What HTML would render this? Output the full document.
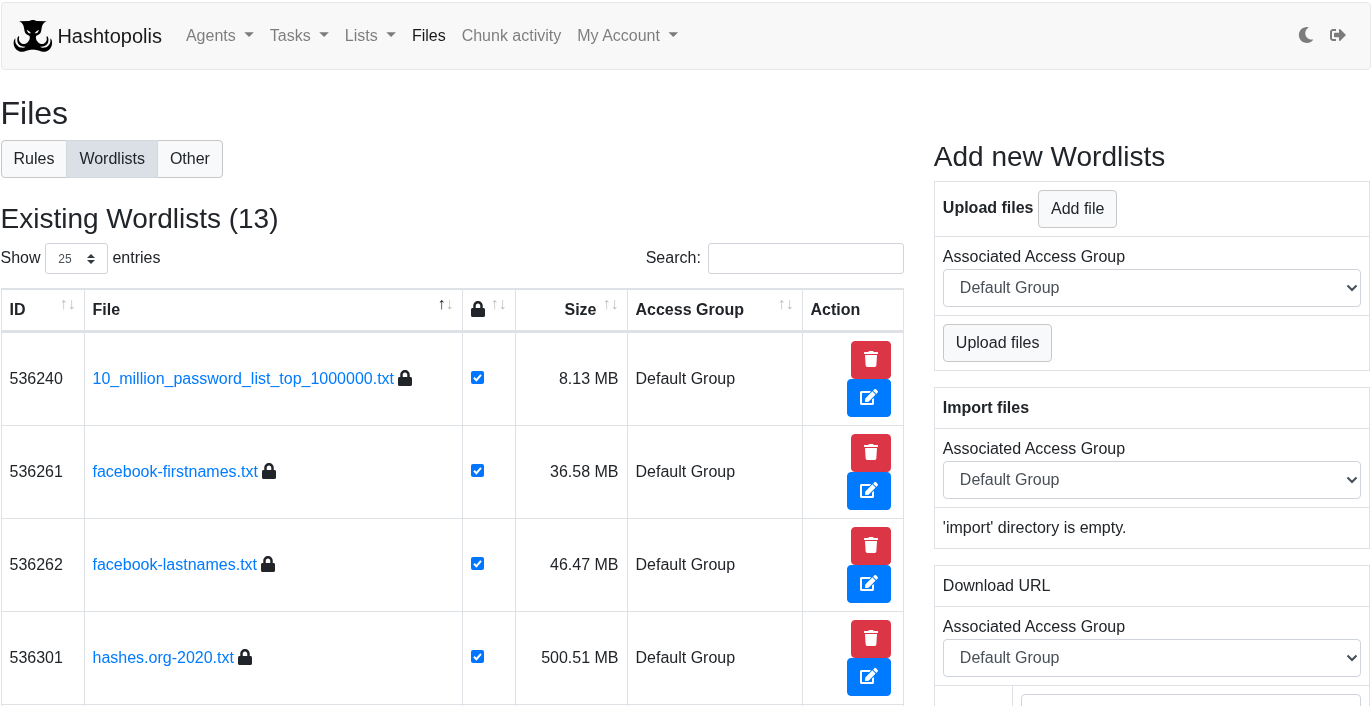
<!DOCTYPE html>
<html lang="en">
<head>
<meta charset="utf-8">
<title>Hashtopolis - Files</title>
<style>
*,*::before,*::after{box-sizing:border-box}
html{font-size:16px;width:1372px;height:706px;overflow:hidden}
body{margin:0;font-family:"Liberation Sans",Arial,sans-serif;font-size:16px;font-weight:400;line-height:1.5;color:#212529;background:#fff;width:1372px;height:706px;overflow:hidden}
a{color:#007bff;text-decoration:none}
h1,h2,h3{margin:0 0 8px;font-weight:500;line-height:1.2}
svg{display:inline-block;vertical-align:-0.125em;height:1em;overflow:visible;fill:currentColor}
.wrap{padding:0 0 0 .5px;width:1372px;height:706px;overflow:hidden;will-change:transform}
/* navbar */
.navbar{position:relative;display:flex;align-items:center;padding:8px 15.5px 8px 10.9px;margin-top:2px;width:1370px;background:#f8f8f8;border:1px solid #e7e7e7;border-radius:4px;height:68px}
.brand{display:flex;align-items:center;padding:5px 0;margin-right:16px;font-size:20px;line-height:30px;color:rgba(0,0,0,.9);white-space:nowrap}
.brand svg.logo{width:40px;height:40px;margin-right:5px;vertical-align:middle}
.nav{display:flex;list-style:none;margin:0;padding:0}
.nav li a{display:block;padding:8px;color:rgba(0,0,0,.5);white-space:nowrap}
.nav li.active a{color:rgba(0,0,0,.9)}
.caret::after{display:inline-block;margin-left:4.08px;vertical-align:4.08px;content:"";width:9.6px;height:4.8px;background:currentColor;clip-path:polygon(0 0,100% 0,50% 100%)}
.nav.nright{margin-left:auto}
/* buttons */
.btn{display:inline-block;font-weight:400;color:#212529;text-align:center;vertical-align:middle;background-color:transparent;border:1px solid transparent;padding:6px 12px;font-size:16px;line-height:1.5;border-radius:4px;font-family:inherit}
.btn-light{background:#f8f9fa;border-color:#c7c7c7}
.btn-light.active{background:#dae0e5;border-color:#d3d9df;position:relative;z-index:1}
.btn-group{display:inline-flex;vertical-align:middle}
.btn-group .btn{border-radius:0;margin-left:-1px}
.btn-group .btn:first-child{margin-left:0;border-radius:4px 0 0 4px}
.btn-group .btn:last-child{border-radius:0 4px 4px 0}
.btn-danger{color:#fff;background:#dc3545;border-color:#dc3545}
.btn-primary{color:#fff;background:#007bff;border-color:#007bff}
.form-control{display:block;width:100%;height:38px;padding:6px 12px;font-size:16px;line-height:1.5;color:#495057;background:#fff;border:1px solid #ced4da;border-radius:4px;font-family:inherit}
.form-control-sm{height:31px;padding:4px 8px;font-size:14px;border-radius:3px}
/* layout */
.row{display:flex}
.left{width:903.33px;flex:none}
.rightcol{width:436.67px;flex:none;margin-left:30px}

h1.title{font-size:32px;line-height:38.4px;margin:24px 0 8px;font-weight:400}
h3.sub{font-size:28px;line-height:33.6px;font-weight:400;margin:0 0 8px}
.left h3.sub{margin-top:23.4px}
.rightcol h3.sub{margin-top:-38px;margin-bottom:7px}
.dt-top{display:flex;justify-content:space-between;align-items:center;height:31px;margin-top:0}
.dt-top label{display:inline-flex;align-items:center;margin:0;white-space:nowrap}
.dt-top .t{position:relative;top:-1px}
.sel-sm{display:inline-block;width:63px;height:31px;margin:0 4.45px 0 4.45px;border:1px solid #ced4da;border-radius:3px;position:relative;font-size:12px;color:#495057;line-height:30.4px;padding-left:12.3px;background:#fff}
.sel-sm svg{position:absolute;right:12px;top:10px;width:8px;height:10px;fill:#343a40}
.search{display:inline-block;width:196px;height:31px;margin-left:7px;border:1px solid #ced4da;border-radius:3px;background:#fff}
table{border-collapse:separate;border-spacing:0}
table.dt{width:100%;margin:14px 0 0;border:1px solid #dee2e6;border-right-width:1px;table-layout:fixed}
table.dt th,table.dt td{padding:8px;border:1px solid #dee2e6;border-left-width:0;border-bottom-width:0;vertical-align:middle;text-align:left}
table.dt th:last-child,table.dt td:last-child{border-right-width:0}
table.dt thead th{border-bottom-width:2px;font-weight:700;position:relative;height:42px;white-space:nowrap}
table.dt thead th.sort::before,table.dt thead th.sort::after{position:absolute;bottom:.9em;display:block;opacity:.3;font-weight:400}
table.dt thead th.sort::before{right:1em;content:"\2191"}
table.dt thead th.sort::after{right:.5em;content:"\2193"}
table.dt thead th.asc::before{opacity:1}
table.dt td{height:93px}
table.dt td.r,table.dt th.r{text-align:right}
table.dt th.r{padding-right:30px}
table.dt td.act{text-align:right;font-size:0;padding-right:12px}
.act .btn{display:inline-block;height:38px;font-size:16px;padding:6px 12px}
.act div{height:38px}
input.cb{appearance:none;-webkit-appearance:none;width:13px;height:13px;margin:0 0 0 0;background:#0075ff;border-radius:2px;vertical-align:middle;position:relative;display:inline-block}
.cbx{display:inline-block;width:13px;height:13px;background:#0075ff;border-radius:2px;vertical-align:middle;position:relative;top:-3px}
.cbx svg{position:absolute;left:0;top:0;width:13px;height:13px}
table.side{width:100%;border:1px solid #dee2e6;margin:0 0 16px}
table.side td,table.side th{padding:8px;border-top:1px solid #dee2e6;vertical-align:top;text-align:left}
table.side tr:first-child td,table.side tr:first-child th{border-top:0}
.fsel{position:relative;white-space:nowrap;padding-left:16px}
.fsel svg{position:absolute;right:2px;top:14px;width:12px;height:8px}
table.dt td a+svg{margin-left:-.3px}
</style>
</head>
<body>
<div class="wrap">
<nav class="navbar">
  <a class="brand"><svg class="logo" viewBox="0 0 40 40"><g transform="translate(1,0)"><g><path d="M20.2 4.1C18.7 4.1 17.3 4.4 16.4 5L6.1 5.2C8.3 6.2 9.8 7.8 10.3 9.3C10.8 10.6 11 11.8 11.2 12.9C11.4 14 11.5 15 11.8 15.9C12.2 17 12.9 17.9 13.9 18.5C14.8 19.1 15.8 19.6 16.6 20.1C16.8 20.9 16.8 21.7 16.7 22.6C16.5 24 16 24.8 15.3 25.5C14.4 26.6 13.4 27.4 12.45 27.7C11.5 28.1 10.5 28.2 9.6 28C8.6 27.6 7.7 27 7.1 26.3C6.4 25.5 6.05 24.6 5.95 23.8C5.85 22.8 5.95 21.8 6.2 20.9L5.6 20.1C4.9 20.8 4.5 21.7 4.35 22.6C4.2 23.6 4.2 24.7 4.45 25.7C4.7 26.9 5.4 27.9 6.2 28.7C7 29.5 8 30 9 30.3C10 30.6 11 30.7 11.9 30.6L12.3 31C12 31.2 11.6 31.4 11.2 31.5C10.2 31.8 9 31.8 7.9 31.6C6.9 31.4 6 31 5.3 30.5C4.4 29.8 3.6 29 3.1 28.1C2.6 27.2 2.35 26.3 2.3 25.4C2.25 24.4 2.3 23.5 2.4 22.6L2.1 22.4C1.2 23.3 0.8 24.4 0.7 25.5C0.55 26.6 0.6 27.8 0.85 28.9C1.1 30.1 1.6 31.3 2.27 32.3C3 33.4 4 34.2 5.1 34.8C6 35.3 6.9 35.65 7.9 35.8C9 35.9 10.2 35.7 11.3 35.4C12.7 35 14 34.6 15.3 34.2C17 33.7 18.6 33.4 20.2 33.4Z" fill="#000"/><path d="M13.7 13.9C15.3 14.3 17.2 15.5 18 17.3C16.4 17.6 14.5 16.7 13.7 13.9Z" fill="#f8f8f8"/></g><g transform="translate(39.7,0) scale(-1,1)"><path d="M20.2 4.1C18.7 4.1 17.3 4.4 16.4 5L6.1 5.2C8.3 6.2 9.8 7.8 10.3 9.3C10.8 10.6 11 11.8 11.2 12.9C11.4 14 11.5 15 11.8 15.9C12.2 17 12.9 17.9 13.9 18.5C14.8 19.1 15.8 19.6 16.6 20.1C16.8 20.9 16.8 21.7 16.7 22.6C16.5 24 16 24.8 15.3 25.5C14.4 26.6 13.4 27.4 12.45 27.7C11.5 28.1 10.5 28.2 9.6 28C8.6 27.6 7.7 27 7.1 26.3C6.4 25.5 6.05 24.6 5.95 23.8C5.85 22.8 5.95 21.8 6.2 20.9L5.6 20.1C4.9 20.8 4.5 21.7 4.35 22.6C4.2 23.6 4.2 24.7 4.45 25.7C4.7 26.9 5.4 27.9 6.2 28.7C7 29.5 8 30 9 30.3C10 30.6 11 30.7 11.9 30.6L12.3 31C12 31.2 11.6 31.4 11.2 31.5C10.2 31.8 9 31.8 7.9 31.6C6.9 31.4 6 31 5.3 30.5C4.4 29.8 3.6 29 3.1 28.1C2.6 27.2 2.35 26.3 2.3 25.4C2.25 24.4 2.3 23.5 2.4 22.6L2.1 22.4C1.2 23.3 0.8 24.4 0.7 25.5C0.55 26.6 0.6 27.8 0.85 28.9C1.1 30.1 1.6 31.3 2.27 32.3C3 33.4 4 34.2 5.1 34.8C6 35.3 6.9 35.65 7.9 35.8C9 35.9 10.2 35.7 11.3 35.4C12.7 35 14 34.6 15.3 34.2C17 33.7 18.6 33.4 20.2 33.4Z" fill="#000"/><path d="M13.7 13.9C15.3 14.3 17.2 15.5 18 17.3C16.4 17.6 14.5 16.7 13.7 13.9Z" fill="#f8f8f8"/></g></g></svg>Hashtopolis</a>
  <ul class="nav">
    <li><a class="caret">Agents </a></li>
    <li><a class="caret">Tasks </a></li>
    <li><a class="caret">Lists </a></li>
    <li class="active"><a>Files</a></li>
    <li><a>Chunk activity</a></li>
    <li><a class="caret">My Account </a></li>
  </ul>
  <ul class="nav nright">
    <li><a><svg viewBox="0 0 512 512"><path d="M283.211 512c78.962 0 151.079-35.925 198.857-94.792 7.068-8.708-.639-21.43-11.562-19.35-124.203 23.654-238.262-71.576-238.262-196.954 0-72.222 38.662-138.635 101.498-174.394 9.686-5.512 7.25-20.197-3.756-22.23A258.156 258.156 0 0 0 283.211 0c-141.309 0-256 114.511-256 256 0 141.309 114.511 256 256 256z"/></svg></a></li>
    <li><a><svg viewBox="0 0 512 512"><path d="M497 273L329 441c-15 15-41 4.500-41-17v-96H152c-13.300 0-24-10.700-24-24v-96c0-13.300 10.700-24 24-24h136V88c0-21.400 25.900-32 41-17l168 168c9.300 9.400 9.300 24.600 0 34zM192 436v-40c0-6.600-5.400-12-12-12H96c-17.700 0-32-14.300-32-32V160c0-17.700 14.300-32 32-32h84c6.600 0 12-5.400 12-12V76c0-6.600-5.400-12-12-12H96c-53 0-96 43-96 96v192c0 53 43 96 96 96h84c6.600 0 12-5.400 12-12z"/></svg></a></li>
  </ul>
</nav>

<h1 class="title">Files</h1>
<div class="btn-group"><a class="btn btn-light">Rules</a><a class="btn btn-light active">Wordlists</a><a class="btn btn-light">Other</a></div>
<div class="row">
<div class="left">
<h3 class="sub">Existing Wordlists (13)</h3>
<div class="dt-top"><label><span class="t">Show</span><span class="sel-sm">25<svg viewBox="0 0 4 5"><path d="M2 0L0 2h4zm0 5L0 3h4z"/></svg></span><span class="t">entries</span></label><label><span class="t">Search:</span><span class="search"></span></label></div>
<table class="dt">
<colgroup><col style="width:83.02px"><col style="width:378px"><col style="width:53px"><col style="width:112px"><col style="width:175px"><col></colgroup>
<thead><tr><th class="sort">ID</th><th class="sort asc">File</th><th class="sort"><svg viewBox="0 0 448 512" style="width:.875em"><path d="M400 224h-24v-72C376 68.2 307.8 0 224 0S72 68.2 72 152v72H48c-26.5 0-48 21.5-48 48v192c0 26.5 21.5 48 48 48h352c26.5 0 48-21.5 48-48V272c0-26.5-21.5-48-48-48zm-104 0H152v-72c0-39.700 32.300-72 72-72s72 32.300 72 72v72z"/></svg></th><th class="sort r">Size</th><th class="sort">Access Group</th><th>Action</th></tr></thead>
<tbody>
<tr><td>536240</td><td><a>10_million_password_list_top_1000000.txt</a> <svg viewBox="0 0 448 512" style="width:.875em"><path d="M400 224h-24v-72C376 68.2 307.8 0 224 0S72 68.2 72 152v72H48c-26.5 0-48 21.5-48 48v192c0 26.5 21.5 48 48 48h352c26.5 0 48-21.5 48-48V272c0-26.5-21.5-48-48-48zm-104 0H152v-72c0-39.700 32.300-72 72-72s72 32.300 72 72v72z"/></svg></td><td><span class="cbx"><svg viewBox="0 0 13 13"><path d="M3 6.800 L5.400 9.200 L10 3.800" fill="none" stroke="#fff" stroke-width="2" stroke-linecap="butt"/></svg></span></td><td class="r">8.13 MB</td><td>Default Group</td><td class="act"><div><span class="btn btn-danger"><svg viewBox="0 0 448 512" style="width:.875em"><path d="M432 32H312l-9.400-18.700A24 24 0 0 0 281.100 0H166.800a23.720 23.720 0 0 0-21.400 13.300L136 32H16A16 16 0 0 0 0 48v32a16 16 0 0 0 16 16h416a16 16 0 0 0 16-16V48a16 16 0 0 0-16-16zM53.200 467a48 48 0 0 0 47.900 45h245.800a48 48 0 0 0 47.900-45L416 128H32z"/></svg></span></div><div><span class="btn btn-primary"><svg viewBox="0 0 576 512" style="width:1.125em"><path d="M402.600 83.200l90.200 90.200c3.800 3.800 3.800 10 0 13.800L274.400 405.600l-92.800 10.300c-12.400 1.400-22.900-9.100-21.500-21.500l10.300-92.800L388.800 83.200c3.800-3.800 10-3.800 13.800 0zm162-22.900l-48.800-48.800c-15.200-15.200-39.900-15.200-55.200 0l-35.400 35.400c-3.800 3.800-3.800 10 0 13.800l90.200 90.200c3.800 3.800 10 3.800 13.800 0l35.400-35.400c15.200-15.300 15.200-40 0-55.200zM384 346.200V448H64V128h229.800c3.200 0 6.200-1.300 8.500-3.500l40-40c7.600-7.600 2.200-20.500-8.500-20.500H48C21.500 64 0 85.500 0 112v352c0 26.500 21.500 48 48 48h352c26.500 0 48-21.500 48-48V306.200c0-10.700-12.900-16-20.500-8.500l-40 40c-2.200 2.300-3.500 5.300-3.500 8.500z"/></svg></span></div></td></tr>
<tr><td>536261</td><td><a>facebook-firstnames.txt</a> <svg viewBox="0 0 448 512" style="width:.875em"><path d="M400 224h-24v-72C376 68.2 307.8 0 224 0S72 68.2 72 152v72H48c-26.5 0-48 21.5-48 48v192c0 26.5 21.5 48 48 48h352c26.5 0 48-21.5 48-48V272c0-26.5-21.5-48-48-48zm-104 0H152v-72c0-39.700 32.300-72 72-72s72 32.300 72 72v72z"/></svg></td><td><span class="cbx"><svg viewBox="0 0 13 13"><path d="M3 6.800 L5.400 9.200 L10 3.800" fill="none" stroke="#fff" stroke-width="2" stroke-linecap="butt"/></svg></span></td><td class="r">36.58 MB</td><td>Default Group</td><td class="act"><div><span class="btn btn-danger"><svg viewBox="0 0 448 512" style="width:.875em"><path d="M432 32H312l-9.400-18.700A24 24 0 0 0 281.100 0H166.800a23.720 23.720 0 0 0-21.400 13.300L136 32H16A16 16 0 0 0 0 48v32a16 16 0 0 0 16 16h416a16 16 0 0 0 16-16V48a16 16 0 0 0-16-16zM53.200 467a48 48 0 0 0 47.900 45h245.800a48 48 0 0 0 47.900-45L416 128H32z"/></svg></span></div><div><span class="btn btn-primary"><svg viewBox="0 0 576 512" style="width:1.125em"><path d="M402.600 83.200l90.200 90.200c3.800 3.800 3.800 10 0 13.800L274.400 405.600l-92.800 10.300c-12.400 1.400-22.900-9.100-21.500-21.500l10.300-92.800L388.800 83.200c3.800-3.800 10-3.800 13.800 0zm162-22.900l-48.800-48.800c-15.200-15.200-39.900-15.200-55.200 0l-35.400 35.400c-3.800 3.800-3.800 10 0 13.800l90.200 90.200c3.800 3.800 10 3.800 13.800 0l35.400-35.400c15.200-15.300 15.200-40 0-55.200zM384 346.200V448H64V128h229.800c3.200 0 6.200-1.300 8.500-3.500l40-40c7.600-7.600 2.200-20.500-8.500-20.500H48C21.500 64 0 85.500 0 112v352c0 26.500 21.500 48 48 48h352c26.500 0 48-21.500 48-48V306.200c0-10.700-12.900-16-20.500-8.500l-40 40c-2.200 2.300-3.500 5.300-3.500 8.500z"/></svg></span></div></td></tr>
<tr><td>536262</td><td><a>facebook-lastnames.txt</a> <svg viewBox="0 0 448 512" style="width:.875em"><path d="M400 224h-24v-72C376 68.2 307.8 0 224 0S72 68.2 72 152v72H48c-26.5 0-48 21.5-48 48v192c0 26.5 21.5 48 48 48h352c26.5 0 48-21.5 48-48V272c0-26.5-21.5-48-48-48zm-104 0H152v-72c0-39.700 32.300-72 72-72s72 32.300 72 72v72z"/></svg></td><td><span class="cbx"><svg viewBox="0 0 13 13"><path d="M3 6.800 L5.400 9.200 L10 3.800" fill="none" stroke="#fff" stroke-width="2" stroke-linecap="butt"/></svg></span></td><td class="r">46.47 MB</td><td>Default Group</td><td class="act"><div><span class="btn btn-danger"><svg viewBox="0 0 448 512" style="width:.875em"><path d="M432 32H312l-9.400-18.700A24 24 0 0 0 281.100 0H166.800a23.720 23.720 0 0 0-21.400 13.300L136 32H16A16 16 0 0 0 0 48v32a16 16 0 0 0 16 16h416a16 16 0 0 0 16-16V48a16 16 0 0 0-16-16zM53.200 467a48 48 0 0 0 47.900 45h245.800a48 48 0 0 0 47.900-45L416 128H32z"/></svg></span></div><div><span class="btn btn-primary"><svg viewBox="0 0 576 512" style="width:1.125em"><path d="M402.600 83.200l90.200 90.200c3.800 3.800 3.800 10 0 13.800L274.400 405.600l-92.800 10.300c-12.400 1.400-22.900-9.100-21.500-21.500l10.300-92.800L388.800 83.200c3.800-3.800 10-3.800 13.800 0zm162-22.900l-48.800-48.800c-15.200-15.200-39.900-15.200-55.200 0l-35.400 35.400c-3.800 3.800-3.800 10 0 13.800l90.200 90.200c3.800 3.800 10 3.800 13.800 0l35.400-35.400c15.200-15.300 15.200-40 0-55.200zM384 346.200V448H64V128h229.800c3.200 0 6.200-1.300 8.500-3.500l40-40c7.600-7.600 2.200-20.500-8.500-20.500H48C21.500 64 0 85.500 0 112v352c0 26.500 21.500 48 48 48h352c26.500 0 48-21.500 48-48V306.200c0-10.700-12.900-16-20.500-8.500l-40 40c-2.200 2.300-3.500 5.300-3.500 8.500z"/></svg></span></div></td></tr>
<tr><td>536301</td><td><a>hashes.org-2020.txt</a> <svg viewBox="0 0 448 512" style="width:.875em"><path d="M400 224h-24v-72C376 68.2 307.8 0 224 0S72 68.2 72 152v72H48c-26.5 0-48 21.5-48 48v192c0 26.5 21.5 48 48 48h352c26.5 0 48-21.5 48-48V272c0-26.5-21.5-48-48-48zm-104 0H152v-72c0-39.700 32.300-72 72-72s72 32.300 72 72v72z"/></svg></td><td><span class="cbx"><svg viewBox="0 0 13 13"><path d="M3 6.800 L5.400 9.200 L10 3.800" fill="none" stroke="#fff" stroke-width="2" stroke-linecap="butt"/></svg></span></td><td class="r">500.51 MB</td><td>Default Group</td><td class="act"><div><span class="btn btn-danger"><svg viewBox="0 0 448 512" style="width:.875em"><path d="M432 32H312l-9.400-18.700A24 24 0 0 0 281.100 0H166.800a23.720 23.720 0 0 0-21.400 13.300L136 32H16A16 16 0 0 0 0 48v32a16 16 0 0 0 16 16h416a16 16 0 0 0 16-16V48a16 16 0 0 0-16-16zM53.200 467a48 48 0 0 0 47.900 45h245.800a48 48 0 0 0 47.900-45L416 128H32z"/></svg></span></div><div><span class="btn btn-primary"><svg viewBox="0 0 576 512" style="width:1.125em"><path d="M402.600 83.200l90.200 90.200c3.800 3.800 3.800 10 0 13.800L274.400 405.600l-92.800 10.300c-12.400 1.400-22.900-9.100-21.500-21.500l10.300-92.800L388.800 83.200c3.800-3.800 10-3.800 13.800 0zm162-22.900l-48.800-48.800c-15.200-15.200-39.900-15.200-55.200 0l-35.400 35.400c-3.800 3.800-3.800 10 0 13.800l90.200 90.200c3.800 3.800 10 3.800 13.800 0l35.400-35.400c15.200-15.300 15.200-40 0-55.200zM384 346.200V448H64V128h229.800c3.200 0 6.200-1.300 8.500-3.500l40-40c7.600-7.600 2.200-20.500-8.500-20.500H48C21.500 64 0 85.500 0 112v352c0 26.500 21.500 48 48 48h352c26.500 0 48-21.500 48-48V306.200c0-10.700-12.900-16-20.500-8.500l-40 40c-2.200 2.300-3.500 5.300-3.500 8.500z"/></svg></span></div></td></tr>
<tr><td>536302</td><td><a>hk_hlm_founds.txt</a> <svg viewBox="0 0 448 512" style="width:.875em"><path d="M400 224h-24v-72C376 68.2 307.8 0 224 0S72 68.2 72 152v72H48c-26.5 0-48 21.5-48 48v192c0 26.5 21.5 48 48 48h352c26.5 0 48-21.5 48-48V272c0-26.5-21.5-48-48-48zm-104 0H152v-72c0-39.700 32.300-72 72-72s72 32.300 72 72v72z"/></svg></td><td><span class="cbx"><svg viewBox="0 0 13 13"><path d="M3 6.800 L5.400 9.200 L10 3.800" fill="none" stroke="#fff" stroke-width="2" stroke-linecap="butt"/></svg></span></td><td class="r">367.25 MB</td><td>Default Group</td><td class="act"><div><span class="btn btn-danger"><svg viewBox="0 0 448 512" style="width:.875em"><path d="M432 32H312l-9.400-18.700A24 24 0 0 0 281.100 0H166.800a23.720 23.720 0 0 0-21.400 13.300L136 32H16A16 16 0 0 0 0 48v32a16 16 0 0 0 16 16h416a16 16 0 0 0 16-16V48a16 16 0 0 0-16-16zM53.200 467a48 48 0 0 0 47.900 45h245.800a48 48 0 0 0 47.900-45L416 128H32z"/></svg></span></div><div><span class="btn btn-primary"><svg viewBox="0 0 576 512" style="width:1.125em"><path d="M402.600 83.200l90.200 90.200c3.800 3.800 3.800 10 0 13.800L274.400 405.600l-92.800 10.300c-12.400 1.400-22.900-9.100-21.500-21.500l10.300-92.800L388.800 83.200c3.800-3.800 10-3.800 13.800 0zm162-22.900l-48.800-48.800c-15.200-15.200-39.900-15.200-55.200 0l-35.400 35.400c-3.800 3.800-3.800 10 0 13.800l90.200 90.200c3.800 3.800 10 3.800 13.800 0l35.400-35.400c15.200-15.300 15.200-40 0-55.200zM384 346.200V448H64V128h229.800c3.200 0 6.200-1.300 8.500-3.500l40-40c7.600-7.600 2.200-20.500-8.500-20.500H48C21.500 64 0 85.500 0 112v352c0 26.500 21.500 48 48 48h352c26.500 0 48-21.500 48-48V306.200c0-10.700-12.900-16-20.500-8.500l-40 40c-2.200 2.300-3.500 5.300-3.500 8.500z"/></svg></span></div></td></tr>
<tr><td>536303</td><td><a>kaonashi.txt</a> <svg viewBox="0 0 448 512" style="width:.875em"><path d="M400 224h-24v-72C376 68.2 307.8 0 224 0S72 68.2 72 152v72H48c-26.5 0-48 21.5-48 48v192c0 26.5 21.5 48 48 48h352c26.5 0 48-21.5 48-48V272c0-26.5-21.5-48-48-48zm-104 0H152v-72c0-39.700 32.300-72 72-72s72 32.300 72 72v72z"/></svg></td><td><span class="cbx"><svg viewBox="0 0 13 13"><path d="M3 6.800 L5.400 9.200 L10 3.800" fill="none" stroke="#fff" stroke-width="2" stroke-linecap="butt"/></svg></span></td><td class="r">9.42 GB</td><td>Default Group</td><td class="act"><div><span class="btn btn-danger"><svg viewBox="0 0 448 512" style="width:.875em"><path d="M432 32H312l-9.400-18.700A24 24 0 0 0 281.100 0H166.800a23.720 23.720 0 0 0-21.400 13.300L136 32H16A16 16 0 0 0 0 48v32a16 16 0 0 0 16 16h416a16 16 0 0 0 16-16V48a16 16 0 0 0-16-16zM53.200 467a48 48 0 0 0 47.900 45h245.800a48 48 0 0 0 47.900-45L416 128H32z"/></svg></span></div><div><span class="btn btn-primary"><svg viewBox="0 0 576 512" style="width:1.125em"><path d="M402.600 83.200l90.200 90.200c3.800 3.800 3.800 10 0 13.800L274.400 405.600l-92.800 10.300c-12.400 1.400-22.900-9.100-21.500-21.500l10.300-92.800L388.800 83.200c3.800-3.800 10-3.800 13.800 0zm162-22.900l-48.800-48.800c-15.200-15.200-39.900-15.200-55.200 0l-35.400 35.400c-3.800 3.800-3.800 10 0 13.800l90.200 90.200c3.800 3.800 10 3.800 13.800 0l35.400-35.400c15.200-15.300 15.200-40 0-55.200zM384 346.200V448H64V128h229.800c3.200 0 6.200-1.300 8.500-3.500l40-40c7.600-7.600 2.200-20.500-8.500-20.500H48C21.500 64 0 85.500 0 112v352c0 26.500 21.500 48 48 48h352c26.500 0 48-21.500 48-48V306.200c0-10.700-12.900-16-20.500-8.500l-40 40c-2.200 2.300-3.500 5.300-3.500 8.500z"/></svg></span></div></td></tr>
<tr><td>536304</td><td><a>probable-v2-top12000.txt</a> <svg viewBox="0 0 448 512" style="width:.875em"><path d="M400 224h-24v-72C376 68.2 307.8 0 224 0S72 68.2 72 152v72H48c-26.5 0-48 21.5-48 48v192c0 26.5 21.5 48 48 48h352c26.5 0 48-21.5 48-48V272c0-26.5-21.5-48-48-48zm-104 0H152v-72c0-39.700 32.300-72 72-72s72 32.300 72 72v72z"/></svg></td><td><span class="cbx"><svg viewBox="0 0 13 13"><path d="M3 6.800 L5.400 9.200 L10 3.800" fill="none" stroke="#fff" stroke-width="2" stroke-linecap="butt"/></svg></span></td><td class="r">97.15 kB</td><td>Default Group</td><td class="act"><div><span class="btn btn-danger"><svg viewBox="0 0 448 512" style="width:.875em"><path d="M432 32H312l-9.400-18.700A24 24 0 0 0 281.100 0H166.800a23.720 23.720 0 0 0-21.400 13.300L136 32H16A16 16 0 0 0 0 48v32a16 16 0 0 0 16 16h416a16 16 0 0 0 16-16V48a16 16 0 0 0-16-16zM53.200 467a48 48 0 0 0 47.900 45h245.800a48 48 0 0 0 47.900-45L416 128H32z"/></svg></span></div><div><span class="btn btn-primary"><svg viewBox="0 0 576 512" style="width:1.125em"><path d="M402.600 83.200l90.200 90.200c3.800 3.800 3.800 10 0 13.800L274.400 405.600l-92.800 10.300c-12.400 1.400-22.900-9.100-21.500-21.500l10.300-92.800L388.800 83.200c3.800-3.800 10-3.800 13.800 0zm162-22.900l-48.800-48.800c-15.200-15.200-39.900-15.200-55.200 0l-35.400 35.400c-3.800 3.800-3.800 10 0 13.800l90.200 90.200c3.800 3.800 10 3.800 13.800 0l35.400-35.400c15.200-15.300 15.200-40 0-55.200zM384 346.200V448H64V128h229.800c3.200 0 6.200-1.300 8.500-3.500l40-40c7.600-7.600 2.200-20.500-8.500-20.500H48C21.500 64 0 85.500 0 112v352c0 26.500 21.500 48 48 48h352c26.500 0 48-21.500 48-48V306.200c0-10.700-12.900-16-20.500-8.500l-40 40c-2.200 2.300-3.500 5.300-3.500 8.500z"/></svg></span></div></td></tr>
<tr><td>536305</td><td><a>rockyou.txt</a> <svg viewBox="0 0 448 512" style="width:.875em"><path d="M400 224h-24v-72C376 68.2 307.8 0 224 0S72 68.2 72 152v72H48c-26.5 0-48 21.5-48 48v192c0 26.5 21.5 48 48 48h352c26.5 0 48-21.5 48-48V272c0-26.5-21.5-48-48-48zm-104 0H152v-72c0-39.700 32.300-72 72-72s72 32.300 72 72v72z"/></svg></td><td><span class="cbx"><svg viewBox="0 0 13 13"><path d="M3 6.800 L5.400 9.200 L10 3.800" fill="none" stroke="#fff" stroke-width="2" stroke-linecap="butt"/></svg></span></td><td class="r">133.44 MB</td><td>Default Group</td><td class="act"><div><span class="btn btn-danger"><svg viewBox="0 0 448 512" style="width:.875em"><path d="M432 32H312l-9.400-18.700A24 24 0 0 0 281.100 0H166.800a23.720 23.720 0 0 0-21.400 13.300L136 32H16A16 16 0 0 0 0 48v32a16 16 0 0 0 16 16h416a16 16 0 0 0 16-16V48a16 16 0 0 0-16-16zM53.200 467a48 48 0 0 0 47.900 45h245.800a48 48 0 0 0 47.900-45L416 128H32z"/></svg></span></div><div><span class="btn btn-primary"><svg viewBox="0 0 576 512" style="width:1.125em"><path d="M402.600 83.200l90.200 90.200c3.800 3.800 3.800 10 0 13.800L274.400 405.600l-92.800 10.300c-12.400 1.400-22.900-9.100-21.500-21.500l10.300-92.800L388.800 83.200c3.800-3.800 10-3.800 13.800 0zm162-22.900l-48.800-48.800c-15.200-15.200-39.900-15.200-55.200 0l-35.400 35.400c-3.800 3.800-3.800 10 0 13.800l90.200 90.200c3.800 3.800 10 3.800 13.800 0l35.400-35.400c15.200-15.300 15.200-40 0-55.200zM384 346.200V448H64V128h229.800c3.200 0 6.200-1.300 8.500-3.500l40-40c7.600-7.600 2.200-20.500-8.500-20.500H48C21.500 64 0 85.500 0 112v352c0 26.500 21.500 48 48 48h352c26.500 0 48-21.500 48-48V306.200c0-10.700-12.900-16-20.500-8.500l-40 40c-2.200 2.300-3.500 5.300-3.500 8.500z"/></svg></span></div></td></tr>
<tr><td>536306</td><td><a>rockyou2021.txt</a> <svg viewBox="0 0 448 512" style="width:.875em"><path d="M400 224h-24v-72C376 68.2 307.8 0 224 0S72 68.2 72 152v72H48c-26.5 0-48 21.5-48 48v192c0 26.5 21.5 48 48 48h352c26.5 0 48-21.5 48-48V272c0-26.5-21.5-48-48-48zm-104 0H152v-72c0-39.700 32.300-72 72-72s72 32.300 72 72v72z"/></svg></td><td><span class="cbx"><svg viewBox="0 0 13 13"><path d="M3 6.800 L5.400 9.200 L10 3.800" fill="none" stroke="#fff" stroke-width="2" stroke-linecap="butt"/></svg></span></td><td class="r">91.62 GB</td><td>Default Group</td><td class="act"><div><span class="btn btn-danger"><svg viewBox="0 0 448 512" style="width:.875em"><path d="M432 32H312l-9.400-18.700A24 24 0 0 0 281.100 0H166.800a23.720 23.720 0 0 0-21.400 13.300L136 32H16A16 16 0 0 0 0 48v32a16 16 0 0 0 16 16h416a16 16 0 0 0 16-16V48a16 16 0 0 0-16-16zM53.200 467a48 48 0 0 0 47.900 45h245.800a48 48 0 0 0 47.900-45L416 128H32z"/></svg></span></div><div><span class="btn btn-primary"><svg viewBox="0 0 576 512" style="width:1.125em"><path d="M402.600 83.200l90.200 90.200c3.800 3.800 3.800 10 0 13.800L274.400 405.600l-92.800 10.300c-12.400 1.400-22.900-9.100-21.500-21.500l10.300-92.800L388.800 83.200c3.800-3.800 10-3.800 13.800 0zm162-22.900l-48.800-48.800c-15.200-15.200-39.900-15.200-55.200 0l-35.400 35.400c-3.800 3.800-3.800 10 0 13.800l90.200 90.200c3.800 3.800 10 3.800 13.800 0l35.400-35.400c15.200-15.300 15.200-40 0-55.200zM384 346.200V448H64V128h229.800c3.200 0 6.200-1.300 8.500-3.500l40-40c7.600-7.600 2.200-20.500-8.500-20.500H48C21.500 64 0 85.500 0 112v352c0 26.500 21.500 48 48 48h352c26.500 0 48-21.500 48-48V306.200c0-10.700-12.900-16-20.500-8.500l-40 40c-2.200 2.300-3.500 5.300-3.500 8.500z"/></svg></span></div></td></tr>
<tr><td>536307</td><td><a>top10000.txt</a> <svg viewBox="0 0 448 512" style="width:.875em"><path d="M400 224h-24v-72C376 68.2 307.8 0 224 0S72 68.2 72 152v72H48c-26.5 0-48 21.5-48 48v192c0 26.5 21.5 48 48 48h352c26.5 0 48-21.5 48-48V272c0-26.5-21.5-48-48-48zm-104 0H152v-72c0-39.700 32.300-72 72-72s72 32.300 72 72v72z"/></svg></td><td><span class="cbx"><svg viewBox="0 0 13 13"><path d="M3 6.800 L5.400 9.200 L10 3.800" fill="none" stroke="#fff" stroke-width="2" stroke-linecap="butt"/></svg></span></td><td class="r">74.45 kB</td><td>Default Group</td><td class="act"><div><span class="btn btn-danger"><svg viewBox="0 0 448 512" style="width:.875em"><path d="M432 32H312l-9.400-18.700A24 24 0 0 0 281.100 0H166.800a23.720 23.720 0 0 0-21.400 13.300L136 32H16A16 16 0 0 0 0 48v32a16 16 0 0 0 16 16h416a16 16 0 0 0 16-16V48a16 16 0 0 0-16-16zM53.200 467a48 48 0 0 0 47.900 45h245.800a48 48 0 0 0 47.900-45L416 128H32z"/></svg></span></div><div><span class="btn btn-primary"><svg viewBox="0 0 576 512" style="width:1.125em"><path d="M402.600 83.200l90.200 90.200c3.800 3.800 3.800 10 0 13.800L274.400 405.600l-92.800 10.300c-12.400 1.400-22.900-9.100-21.500-21.500l10.300-92.800L388.800 83.200c3.800-3.800 10-3.800 13.800 0zm162-22.900l-48.800-48.800c-15.200-15.200-39.900-15.200-55.200 0l-35.400 35.400c-3.800 3.800-3.800 10 0 13.800l90.200 90.200c3.800 3.800 10 3.800 13.800 0l35.400-35.400c15.200-15.300 15.200-40 0-55.200zM384 346.200V448H64V128h229.800c3.200 0 6.200-1.300 8.500-3.500l40-40c7.600-7.600 2.200-20.500-8.500-20.500H48C21.500 64 0 85.500 0 112v352c0 26.500 21.500 48 48 48h352c26.500 0 48-21.500 48-48V306.200c0-10.700-12.900-16-20.500-8.500l-40 40c-2.200 2.300-3.500 5.300-3.500 8.500z"/></svg></span></div></td></tr>
<tr><td>536308</td><td><a>weakpass_3a.txt</a> <svg viewBox="0 0 448 512" style="width:.875em"><path d="M400 224h-24v-72C376 68.2 307.8 0 224 0S72 68.2 72 152v72H48c-26.5 0-48 21.5-48 48v192c0 26.5 21.5 48 48 48h352c26.5 0 48-21.5 48-48V272c0-26.5-21.5-48-48-48zm-104 0H152v-72c0-39.700 32.300-72 72-72s72 32.300 72 72v72z"/></svg></td><td><span class="cbx"><svg viewBox="0 0 13 13"><path d="M3 6.800 L5.400 9.200 L10 3.800" fill="none" stroke="#fff" stroke-width="2" stroke-linecap="butt"/></svg></span></td><td class="r">107.77 GB</td><td>Default Group</td><td class="act"><div><span class="btn btn-danger"><svg viewBox="0 0 448 512" style="width:.875em"><path d="M432 32H312l-9.400-18.700A24 24 0 0 0 281.100 0H166.800a23.720 23.720 0 0 0-21.400 13.300L136 32H16A16 16 0 0 0 0 48v32a16 16 0 0 0 16 16h416a16 16 0 0 0 16-16V48a16 16 0 0 0-16-16zM53.200 467a48 48 0 0 0 47.900 45h245.800a48 48 0 0 0 47.900-45L416 128H32z"/></svg></span></div><div><span class="btn btn-primary"><svg viewBox="0 0 576 512" style="width:1.125em"><path d="M402.600 83.200l90.200 90.200c3.800 3.800 3.800 10 0 13.800L274.400 405.600l-92.800 10.300c-12.400 1.400-22.900-9.100-21.500-21.500l10.300-92.800L388.800 83.200c3.800-3.800 10-3.800 13.800 0zm162-22.900l-48.800-48.800c-15.200-15.200-39.900-15.200-55.200 0l-35.400 35.400c-3.800 3.800-3.800 10 0 13.800l90.200 90.200c3.800 3.800 10 3.800 13.800 0l35.400-35.400c15.200-15.300 15.200-40 0-55.200zM384 346.200V448H64V128h229.800c3.200 0 6.200-1.300 8.500-3.500l40-40c7.600-7.600 2.200-20.500-8.500-20.500H48C21.500 64 0 85.500 0 112v352c0 26.500 21.500 48 48 48h352c26.500 0 48-21.500 48-48V306.200c0-10.700-12.900-16-20.500-8.500l-40 40c-2.200 2.300-3.500 5.300-3.500 8.500z"/></svg></span></div></td></tr>
<tr><td>536309</td><td><a>xato-net-10-million-passwords.txt</a> <svg viewBox="0 0 448 512" style="width:.875em"><path d="M400 224h-24v-72C376 68.2 307.8 0 224 0S72 68.2 72 152v72H48c-26.5 0-48 21.5-48 48v192c0 26.5 21.5 48 48 48h352c26.5 0 48-21.5 48-48V272c0-26.5-21.5-48-48-48zm-104 0H152v-72c0-39.700 32.300-72 72-72s72 32.300 72 72v72z"/></svg></td><td><span class="cbx"><svg viewBox="0 0 13 13"><path d="M3 6.800 L5.400 9.200 L10 3.800" fill="none" stroke="#fff" stroke-width="2" stroke-linecap="butt"/></svg></span></td><td class="r">49.29 MB</td><td>Default Group</td><td class="act"><div><span class="btn btn-danger"><svg viewBox="0 0 448 512" style="width:.875em"><path d="M432 32H312l-9.400-18.700A24 24 0 0 0 281.100 0H166.800a23.720 23.720 0 0 0-21.400 13.300L136 32H16A16 16 0 0 0 0 48v32a16 16 0 0 0 16 16h416a16 16 0 0 0 16-16V48a16 16 0 0 0-16-16zM53.200 467a48 48 0 0 0 47.900 45h245.800a48 48 0 0 0 47.900-45L416 128H32z"/></svg></span></div><div><span class="btn btn-primary"><svg viewBox="0 0 576 512" style="width:1.125em"><path d="M402.600 83.200l90.200 90.200c3.800 3.800 3.800 10 0 13.800L274.400 405.600l-92.800 10.300c-12.400 1.400-22.900-9.100-21.500-21.500l10.300-92.800L388.800 83.200c3.800-3.800 10-3.800 13.800 0zm162-22.900l-48.800-48.800c-15.200-15.200-39.900-15.200-55.200 0l-35.400 35.400c-3.800 3.800-3.800 10 0 13.800l90.200 90.200c3.800 3.800 10 3.800 13.800 0l35.400-35.400c15.200-15.300 15.200-40 0-55.200zM384 346.200V448H64V128h229.800c3.200 0 6.200-1.300 8.500-3.500l40-40c7.600-7.600 2.200-20.500-8.500-20.500H48C21.500 64 0 85.500 0 112v352c0 26.500 21.500 48 48 48h352c26.500 0 48-21.500 48-48V306.200c0-10.700-12.900-16-20.500-8.500l-40 40c-2.200 2.300-3.500 5.300-3.500 8.500z"/></svg></span></div></td></tr>
<tr><td>536310</td><td><a>zxcvbn.txt</a> <svg viewBox="0 0 448 512" style="width:.875em"><path d="M400 224h-24v-72C376 68.2 307.8 0 224 0S72 68.2 72 152v72H48c-26.5 0-48 21.5-48 48v192c0 26.5 21.5 48 48 48h352c26.5 0 48-21.5 48-48V272c0-26.5-21.5-48-48-48zm-104 0H152v-72c0-39.700 32.300-72 72-72s72 32.300 72 72v72z"/></svg></td><td><span class="cbx"><svg viewBox="0 0 13 13"><path d="M3 6.800 L5.400 9.200 L10 3.800" fill="none" stroke="#fff" stroke-width="2" stroke-linecap="butt"/></svg></span></td><td class="r">2.31 MB</td><td>Default Group</td><td class="act"><div><span class="btn btn-danger"><svg viewBox="0 0 448 512" style="width:.875em"><path d="M432 32H312l-9.400-18.700A24 24 0 0 0 281.100 0H166.800a23.720 23.720 0 0 0-21.400 13.300L136 32H16A16 16 0 0 0 0 48v32a16 16 0 0 0 16 16h416a16 16 0 0 0 16-16V48a16 16 0 0 0-16-16zM53.200 467a48 48 0 0 0 47.900 45h245.800a48 48 0 0 0 47.900-45L416 128H32z"/></svg></span></div><div><span class="btn btn-primary"><svg viewBox="0 0 576 512" style="width:1.125em"><path d="M402.600 83.200l90.200 90.200c3.800 3.800 3.800 10 0 13.800L274.400 405.600l-92.800 10.300c-12.400 1.400-22.900-9.100-21.500-21.500l10.300-92.800L388.800 83.200c3.800-3.800 10-3.800 13.800 0zm162-22.900l-48.800-48.800c-15.200-15.200-39.900-15.200-55.200 0l-35.400 35.400c-3.800 3.800-3.800 10 0 13.800l90.200 90.200c3.800 3.800 10 3.800 13.800 0l35.400-35.400c15.200-15.300 15.200-40 0-55.200zM384 346.200V448H64V128h229.800c3.200 0 6.200-1.300 8.500-3.500l40-40c7.600-7.600 2.200-20.500-8.500-20.500H48C21.500 64 0 85.500 0 112v352c0 26.500 21.500 48 48 48h352c26.500 0 48-21.500 48-48V306.200c0-10.700-12.900-16-20.500-8.500l-40 40c-2.200 2.300-3.500 5.300-3.500 8.500z"/></svg></span></div></td></tr>
</tbody>
</table>
</div>
<div class="rightcol">
<h3 class="sub">Add new Wordlists</h3>
<table class="side">
<tr><th><b>Upload files</b> <span class="btn btn-light">Add file</span></th></tr>
<tr><td>Associated Access Group<div class="form-control fsel">Default Group<svg viewBox="0 0 12 8"><path d="M1.500 1.500 L6 6 L10.500 1.500" fill="none" stroke="#454d55" stroke-width="2"/></svg></div></td></tr>
<tr><td><span class="btn btn-light">Upload files</span></td></tr>
</table>
<table class="side">
<tr><th><b>Import files</b></th></tr>
<tr><td>Associated Access Group<div class="form-control fsel">Default Group<svg viewBox="0 0 12 8"><path d="M1.500 1.500 L6 6 L10.500 1.500" fill="none" stroke="#454d55" stroke-width="2"/></svg></div></td></tr>
<tr><td>'import' directory is empty.</td></tr>
</table>
<table class="side">
<tr><td colspan="2">Download URL</td></tr>
<tr><td colspan="2">Associated Access Group<div class="form-control fsel">Default Group<svg viewBox="0 0 12 8"><path d="M1.500 1.500 L6 6 L10.500 1.500" fill="none" stroke="#454d55" stroke-width="2"/></svg></div></td></tr>
<tr><td style="width:78px;border-right:1px solid #dee2e6;vertical-align:middle">URL</td><td><div class="form-control"></div><div style="margin-top:8px"><span class="btn btn-light">Download file</span></div></td></tr>
</table>
</div>
</div>
</div>
</body>
</html>
